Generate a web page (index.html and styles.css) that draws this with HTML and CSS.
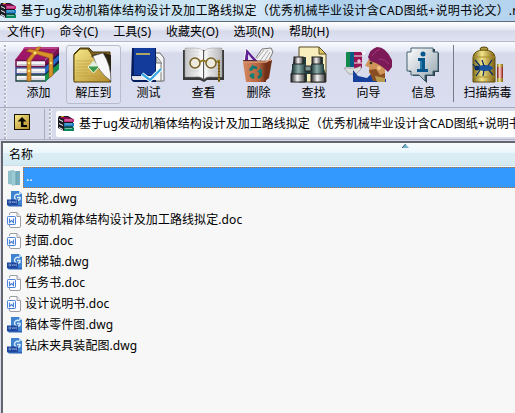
FILE: index.html
```html
<!DOCTYPE html>
<html lang="zh-CN">
<head>
    <meta charset="UTF-8">
    <title>WinRAR</title>
    <link rel="stylesheet" href="styles.css">
</head>
<body>
    <svg class="defs">
        <defs>
            <linearGradient id="gold"><stop offset="0" stop-color="#7c6a18"/><stop offset=".4" stop-color="#f4e58a"/><stop offset="1" stop-color="#7d5f10"/></linearGradient>
            <linearGradient id="folder" x2="1" y2="1"><stop offset="0" stop-color="#f7e88a"/><stop offset="1" stop-color="#b28a28"/></linearGradient>
            <linearGradient id="steel"><stop offset="0" stop-color="#222"/><stop offset=".45" stop-color="#f4f4f4"/><stop offset="1" stop-color="#444"/></linearGradient>
            <linearGradient id="lens"><stop offset="0" stop-color="#17302f"/><stop offset=".45" stop-color="#8fb0ae"/><stop offset="1" stop-color="#1d3938"/></linearGradient>
            <linearGradient id="page"><stop offset="0" stop-color="#c4c4c8"/><stop offset=".5" stop-color="#fff"/><stop offset="1" stop-color="#b4b4b8"/></linearGradient>
            <linearGradient id="bin" x2="1"><stop offset="0" stop-color="#d58a63"/><stop offset=".7" stop-color="#b3633e"/><stop offset="1" stop-color="#70301a"/></linearGradient>
            <linearGradient id="bubble" x2="1" y2="1"><stop offset="0" stop-color="#fff"/><stop offset="1" stop-color="#93a3ad"/></linearGradient>
            <linearGradient id="redcap"><stop offset="0" stop-color="#6d0c08"/><stop offset=".45" stop-color="#ffd5ca"/><stop offset="1" stop-color="#8c1610"/></linearGradient>
        </defs>
        <symbol id="books" viewBox="0 0 16 16">
            <path d="M1 0h9l5 3v12H6L0 12V2z" fill="#1a1a24"/>
            <path d="M1 1h8l6 2H6z" fill="#8c0c50"/>
            <path d="M6 3h10v3H6z" fill="#c42c7c"/>
            <path d="M6 7h10v3.500H6z" fill="#1c7fc0"/>
            <path d="M6 11.500h10v3.500H6z" fill="#0a8a5c"/>
            <path d="M7 4h7M7 8h7M7 12.500h7" stroke="#fff" stroke-opacity=".45"/>
            <path d="M1 3.500l4 2M1 7.500l4 2M1 11.500l4 2" stroke="#fff"/>
            <path d="M3 1l3-1" stroke="#e8b520"/>
        </symbol>
        <symbol id="dwg" viewBox="0 0 16 16">
            <path d="M4 0h8l3 3v12H4z" fill="#3f83d0"/>
            <path d="M12 0v3h3z" fill="#b8dcfa"/>
            <path d="M12.500 4a3 3 0 1 0 .5 4V6.500H10" fill="none" stroke="#d9ecfc" stroke-width="1.400"/>
            <path d="M0 8.500h11V14H0z" fill="#1d459b"/>
            <path d="M2 10v2h1.500v-2zM5 10l.5 2 1-1.500 1 1.500.5-2M10 10H9v2h1" stroke="#9db9ea" stroke-width=".6" fill="none"/>
            <path d="M0 14h15v1.500H2z" fill="#2b62b6"/>
        </symbol>
        <symbol id="doc" viewBox="0 0 16 16">
            <path d="M2.500 3V2q0-1.500 1.500-1.500h6l3.500 4V14q0 1.500-1.500 1.500H4Q2.500 15.500 2.500 14v-1" fill="#fff" stroke="#9a9da3"/>
            <path d="M10 .5V4.500h3.500" fill="#eee" stroke="#9a9da3"/>
            <rect x=".5" y="4.500" width="8" height="8" rx=".7" fill="#fff" stroke="#4d82da"/>
            <path d="M2.500 6.500V10.500l2-2 2 2V6.500" fill="none" stroke="#4d82da" stroke-width="1.200"/>
        </symbol>
    </svg>

    <header class="titlebar">
        <svg class="books"><use href="#books"/></svg>
        <span>基于ug发动机箱体结构设计及加工路线拟定<i>（</i>优秀机械毕业设计含CAD图纸+说明书论文<i class="close">）</i>.rar</span>
    </header>

    <nav class="menu">
        <span>文件(F)</span>
        <span>命令(C)</span>
        <span>工具(S)</span>
        <span>收藏夹(O)</span>
        <span>选项(N)</span>
        <span>帮助(H)</span>
    </nav>

    <div class="toolbar">
        <div class="grip"></div>
        <div class="tool">
            <svg viewBox="0 0 55 38">
                <path d="M34 15L48 1v22L34 36z" fill="#14144a"/>
                <path d="M34 15L48 1v6L34 20z" fill="#7c1050"/>
                <path d="M34 21L48 9v5L34 28z" fill="#2468c4"/>
                <path d="M34 29l14-12v6L34 36z" fill="#16934a"/>
                <path d="M14 1h34L34 14H4z" fill="#9d1667"/>
                <path d="M14 1h34l-2 2H12z" fill="#b8418a"/>
                <path d="M5 14h29v22H5z" fill="#f4f4f6"/>
                <path d="M34 14.500H5v6h29" fill="none" stroke="#70104c" stroke-width="1.500"/>
                <path d="M34 21.800H5v6h29" fill="none" stroke="#20307a" stroke-width="1.300"/>
                <path d="M34 29H5v6h29" fill="none" stroke="#143c3c" stroke-width="1.300"/>
                <path d="M7 18.500h27M7 26h27M7 33h27" stroke="#c7c7cf"/>
                <path d="M26 1h4l-10 14v20h-4V14z" fill="#d9922a" stroke="#8e5010" stroke-width=".6"/>
                <path d="M15 5l4-2 23 5v21l-4 3V12z" fill="#d9922a" stroke="#8e5010" stroke-width=".6"/>
                <circle cx="18" cy="17" r="1.300" fill="#ffe571"/><circle cx="18" cy="25" r="1.300" fill="#ffe571"/><circle cx="24" cy="7" r="1.500" fill="#ffe571"/><circle cx="40" cy="17" r="1.300" fill="#ffe571"/>
            </svg>
            <span>添加</span>
        </div>
        <div class="tool hot">
            <svg viewBox="0 0 55 38">
                <path d="M8 8l6-6h9l4 4h17v28H8z" fill="#7e6422" stroke="#463708"/>
                <path d="M26 9l12-2 7 2v25l-5 1z" fill="#2a2410"/>
                <path d="M8 9l6-6h8l4 6v2h10q-1 12 9 25H8z" fill="url(#folder)" stroke="#554006"/>
                <path d="M27 10l10-3q8 12 8 28Q32 26 27 10z" fill="#f8f8f8" stroke="#555" stroke-width=".6"/>
                <path d="M10 15h16M10 18h17M10 21h12M10 24h11M10 27h12M10 30h25" stroke="#bb9b3c" stroke-width=".6"/>
                <path d="M22 21l5.500-6 5.500 6-5.500 6z" fill="#3e9849" stroke="#f6f4dd"/>
                <path d="M23 20.500l4.500-5 4.500 5z" fill="#e8efe5"/>
            </svg>
            <span>解压到</span>
        </div>
        <div class="tool">
            <svg viewBox="0 0 55 38">
                <path d="M31 7h8l4 5v23H28z" fill="#f5f5f7" stroke="#686868"/>
                <path d="M28 11h8l4 5v19H26z" fill="#fff" stroke="#777"/>
                <path d="M35 11v6h6" fill="#ccc" stroke="#777"/>
                <path d="M11 2h24v28H11q-1 3 2 4h22v2H13q-3-1-3-4z" fill="#071e5e"/>
                <path d="M13 2h21v27H13z" fill="#123b9c"/>
                <path d="M12 31h22v3H12z" fill="#e5e5ea"/>
                <path d="M15 8h14" stroke="#e2c854" stroke-width="1.500"/>
                <path d="M21 28l8 6L40 23" fill="none" stroke="#fff" stroke-width="4"/>
                <path d="M21 28l8 6L40 23" fill="none" stroke="#37a7e4" stroke-width="2.200"/>
            </svg>
            <span>测试</span>
        </div>
        <div class="tool">
            <svg viewBox="0 0 55 38">
                <path d="M7 4h41v30H31l-3 2-4-2H7z" fill="#393939"/>
                <path d="M9 2h10q6 0 8.500 3v28q-3-3-9-2H9zM46 2H36q-5 0-8 3v28q3-3 9-2h9z" fill="url(#page)" stroke="#999" stroke-width=".5"/>
                <path d="M27.500 4v30" stroke="#555"/>
                <path d="M11 6h12M11 9h12M11 12h11M11 25h12M32 6h11M32 9h11M32 25h10" stroke="#ccc" stroke-width=".6"/>
                <circle cx="19" cy="17" r="5" fill="#eeeade" stroke="#776023" stroke-width="1.500"/>
                <circle cx="35" cy="17" r="5" fill="#eeeade" stroke="#776023" stroke-width="1.500"/>
                <path d="M24 16q3-3 6 0M40 16l3-1v21" fill="none" stroke="#957822" stroke-width="2"/>
                <path d="M43 16v20" stroke="#352a0a" stroke-dasharray="1 2"/>
            </svg>
            <span>查看</span>
        </div>
        <div class="tool">
            <svg viewBox="0 0 55 38">
                <path d="M22 16l9-13 9-1 2 4-6 12z" fill="#f2f2f2" stroke="#777"/>
                <path d="M25 14l8-10M29 15l8-11M33 16l6-10" stroke="#aaa"/>
                <path d="M15 2l13 14H13z" fill="#5e2493" stroke="#fff"/>
                <path d="M17 8l5 6h-5z" fill="#e7d8f5"/>
                <path d="M12 14l29 1-3 4H14z" fill="#572718"/>
                <path d="M12 16h23v20H15z" fill="url(#bin)"/>
                <path d="M35 17l6-3-3 18-5 4z" fill="#713119"/>
                <path d="M12 16h23l5-3" fill="none" stroke="#e09c78" stroke-width="1.500"/>
                <path d="M19 24l3-3 4 1M29 24l1 5-3 3M23 32l-4-3" fill="none" stroke="#08766e" stroke-width="2.500"/>
                <path d="M22 18v6l-4 1zM31 27l-5-1 4-4zM24 28l-3 5-1-6z" fill="#0a827b"/>
            </svg>
            <span>删除</span>
        </div>
        <div class="tool">
            <svg viewBox="0 0 55 38">
                <path d="M13 1h20l7 7v28H13z" fill="#f7edbd" stroke="#584d28"/>
                <path d="M33 1v7h7z" fill="#e1c65d" stroke="#584d28"/>
                <path d="M8 12h8v-1h4v9h7v-9h10v9l3 8v8H27v-8h-6v8H5v-8z" fill="#233c3b"/>
                <rect x="6" y="18" width="14" height="10" fill="url(#lens)"/>
                <rect x="25" y="18" width="13" height="10" fill="url(#lens)"/>
                <rect x="8" y="11" width="9" height="7" fill="url(#steel)" stroke="#222"/>
                <rect x="26" y="11" width="9" height="7" fill="url(#steel)" stroke="#222"/>
                <rect x="5" y="28" width="14" height="8" fill="url(#steel)" stroke="#222"/>
                <rect x="25" y="28" width="14" height="8" fill="url(#steel)" stroke="#222"/>
                <path d="M19 20h6v5h-6z" fill="#7d9792" stroke="#222"/>
            </svg>
            <span>查找</span>
        </div>
        <div class="tool">
            <svg viewBox="0 0 55 38">
                <path d="M5 6h4v15H5z" fill="#11894c"/><path d="M9 6h4v15H9z" fill="#075d88"/><path d="M13 6h8v16h-8z" fill="#9a1455"/>
                <path d="M5 6l3-2h12l1 3M13 10h8M13 17h8" stroke="#eee" fill="none"/>
                <path d="M3 22h12l5-2v3l-5 5H8z" fill="#ddd" stroke="#888" stroke-width=".6"/>
                <path d="M12 36V24l5 6 9 2 5-5 14 6v3z" fill="#17409b"/>
                <path d="M29 11l-5 9 4 1v6l8 8 8-4V16z" fill="#cf9458"/>
                <path d="M28 24l7-1 4 6 5-2v8H32z" fill="#8a5024"/>
                <path d="M34 30l10 2v4H36z" fill="#b99b50"/>
                <circle cx="30" cy="17" r="1.300" fill="#331"/>
                <circle cx="38" cy="22" r="2" fill="#f4c184"/>
                <path d="M27 11q2-8 9-10 9 0 15 13v7l-4 5q-7-8-18-11z" fill="#7c1a58"/>
                <path d="M31 10q4-6 8-7M38 13q6 0 10 5" fill="none" stroke="#a0387a"/>
                <path d="M23 5v4M21 7h4M18 13v4M16 15h4" stroke="#fff"/>
            </svg>
            <span>向导</span>
        </div>
        <div class="tool">
            <svg viewBox="0 0 55 38">
                <path d="M16 3h23v4h4v19h-4v4h-8v7l-7-7h-7v-4h-4V7h3z" fill="#283f4c"/>
                <path d="M15 2h22v4h5v19h-5v4h-8v6l-6-6h-8v-4h-4V6h4z" fill="url(#bubble)" stroke="#436070"/>
                <path d="M22 12h7v11h3v3H21v-3h3v-8h-2z" fill="#07578d"/>
                <circle cx="27" cy="8" r="2.500" fill="#07578d"/>
                <path d="M25 15v8" stroke="#4aa3c9"/>
            </svg>
            <span>信息</span>
        </div>
        <div class="separator"></div>
        <div class="tool">
            <svg viewBox="0 0 55 38">
                <ellipse cx="24" cy="3" rx="4" ry="2" fill="#b19b3f" stroke="#554409"/>
                <path d="M13 11q1-7 11-7t11 7v25H13z" fill="url(#gold)" stroke="#655008"/>
                <path d="M13 11h22M13 31h22" stroke="#a88e2a"/>
                <ellipse cx="25" cy="22" rx="8" ry="3" fill="#17549d"/>
                <circle cx="17" cy="22" r="2.500" fill="#0a2b63"/>
                <path d="M20 20l-5-6M24 20l-2-6M28 20l4-6M20 24l-4 6M24 24l-1 6M29 24l4 5M15 21l-2-3" stroke="#0d2f65" stroke-width="1.300"/>
                <path d="M37 18h6v17h-6z" fill="url(#redcap)"/>
                <path d="M37 18h6v3h-6zM37 32h6v4h-6z" fill="url(#gold)"/>
            </svg>
            <span>扫描病毒</span>
        </div>
    </div>

    <div class="address-bar">
        <div class="grip"></div>
        <div class="up">
            <svg viewBox="0 0 16 16">
                <rect width="16" height="16" fill="#161405"/>
                <path d="M1 1h14v14H1z" fill="url(#folder)"/>
                <path d="M8 3l4.500 4.500H9.500v3.500H13v2H7V7.500H3.500z" fill="#080800"/>
            </svg>
        </div>
        <div class="grip"></div>
        <div class="address">
            <svg class="books"><use href="#books"/></svg>
            <span>基于ug发动机箱体结构设计及加工路线拟定<i>（</i>优秀机械毕业设计含CAD图纸+说明书</span>
        </div>
    </div>

    <main class="list">
        <div class="list-header">
            <span>名称</span>
            <svg class="sort" viewBox="0 0 7 4"><path d="M0 4l3.500-4L7 4z" fill="#78b4cc"/><path d="M0 4l3.500-4" stroke="#2f536c"/></svg>
        </div>
        <div class="row selected">
            <svg viewBox="0 0 16 16"><path d="M1 1l6-1v15l-6-1z" fill="#8fbfca"/><path d="M7 1h6v14H7z" fill="#76aebd"/><path d="M5 2l4-1v14l-4 1z" fill="#9ccbd3"/><path d="M9 2v13" stroke="#679dac"/></svg>
            <span>..</span>
        </div>
        <div class="row"><svg><use href="#dwg"/></svg><span>齿轮.dwg</span></div>
        <div class="row"><svg><use href="#doc"/></svg><span>发动机箱体结构设计及加工路线拟定.doc</span></div>
        <div class="row"><svg><use href="#doc"/></svg><span>封面.doc</span></div>
        <div class="row"><svg><use href="#dwg"/></svg><span>阶梯轴.dwg</span></div>
        <div class="row"><svg><use href="#doc"/></svg><span>任务书.doc</span></div>
        <div class="row"><svg><use href="#doc"/></svg><span>设计说明书.doc</span></div>
        <div class="row"><svg><use href="#dwg"/></svg><span>箱体零件图.dwg</span></div>
        <div class="row"><svg><use href="#dwg"/></svg><span>钻床夹具装配图.dwg</span></div>
    </main>
</body>
</html>
```
FILE: styles.css
```css
* {
    box-sizing: border-box;
}
body {
    display: flex;
    flex-direction: column;
    height: 100vh;
    margin: 0;
    overflow: hidden;
    background: #d6daeb;
    color: #000;
    font: 12px/18px "Noto Sans", "Noto Sans CJK SC", sans-serif;
    white-space: nowrap;
}
svg {
    display: block;
    flex: none;
}
/* full-width brackets keep their whole cell */
i {
    display: inline-block;
    width: 12px;
    font-style: normal;
    text-align: right;
}
i.close {
    text-align: left;
}
.defs {
    position: absolute;
    width: 0;
    height: 0;
}
.books {
    width: 16px;
    height: 16px;
}
.titlebar {
    display: flex;
    align-items: center;
    flex: none;
    gap: 5px;
    height: 22px;
    border-bottom: 1px solid #5d6878;
    background: linear-gradient(90deg, #d7eaf8, #c5e2f1 25%, #d5e9f8 50%, #a9cdec 64%, #c1dcf2 80%, #b4d3ee);
    letter-spacing: 0.25px;
}
.menu {
    display: flex;
    align-items: center;
    flex: none;
    gap: 15px;
    height: 20px;
    padding-left: 7px;
    border-bottom: 1px solid #b5b8c9;
    background: linear-gradient(#fff, #e9ecf6 35%, #d5d9ea 50%, #dfe3f3);
}
.toolbar {
    display: flex;
    flex: none;
    height: 66px;
    padding-top: 3px;
    border-bottom: 1px solid #a8abbb;
    background: linear-gradient(#fafbfe, #e6e9f5 9px, #d6daeb 11px, #d9ddef);
}
.grip {
    flex: none;
    width: 3px;
    margin: 0 4px;
    background: radial-gradient(circle at 1px 1px, #b0b3c3 1px, #fff 1.500px, transparent 2px) 0 0 / 3px 4px;
}
.tool {
    display: flex;
    flex-direction: column;
    align-items: center;
    flex: none;
    width: 55px;
    height: 59px;
    border: 1px solid transparent;
    border-radius: 3px;
}
.tool svg {
    width: 55px;
    height: 38px;
}
.hot {
    border-color: #b8bccd;
    background: linear-gradient(#f0f2fa, #dadeee 40%, #dce0f0);
}
.separator {
    flex: none;
    width: 1px;
    height: 57px;
    margin: 0 6px 0 2px;
    background: #777b89;
}
.address-bar {
    display: flex;
    flex: none;
    height: 32px;
    padding-top: 1px;
    border-bottom: 1px solid #b1b4c4;
}
.up {
    flex: none;
    width: 34px;
    padding: 5px 0 0 3px;
    border-right: 1px solid #a9acbc;
}
.up svg {
    width: 16px;
    height: 16px;
}
.address {
    display: flex;
    align-items: center;
    flex: 1;
    gap: 5px;
    min-width: 0;
    height: 26px;
    margin: 2px 0;
    padding-left: 2px;
    border-radius: 2px 0 0 2px;
    background: #fff;
    overflow: hidden;
}
.list {
    flex: 1;
    margin: 1px 0 0 1px;
    border: 2px solid #65656e;
    border-width: 2px 0 0 2px;
    background: #f7f7f7;
}
.list-header {
    position: relative;
    height: 23px;
    padding: 3px 0 0 6px;
    border-bottom: 1px solid #cbe0e9;
    background: linear-gradient(#f7fcfe, #eaf6fb 45%, #dceef5 46%, #d4eaf3);
}
.sort {
    position: absolute;
    top: 1px;
    left: 399px;
    width: 7px;
    height: 4px;
}
.row {
    display: flex;
    align-items: center;
    height: 21px;
    padding-left: 4px;
    letter-spacing: 0.08px;
}
.row svg {
    width: 16px;
    height: 16px;
}
.row span {
    padding-left: 2px;
}
.selected {
    margin-top: 1px;
}
.selected span {
    flex: 1;
    height: 21px;
    border: 1px dotted #c07030;
    border-right: 0;
    background: #3399ff;
    color: #fff;
}
```
